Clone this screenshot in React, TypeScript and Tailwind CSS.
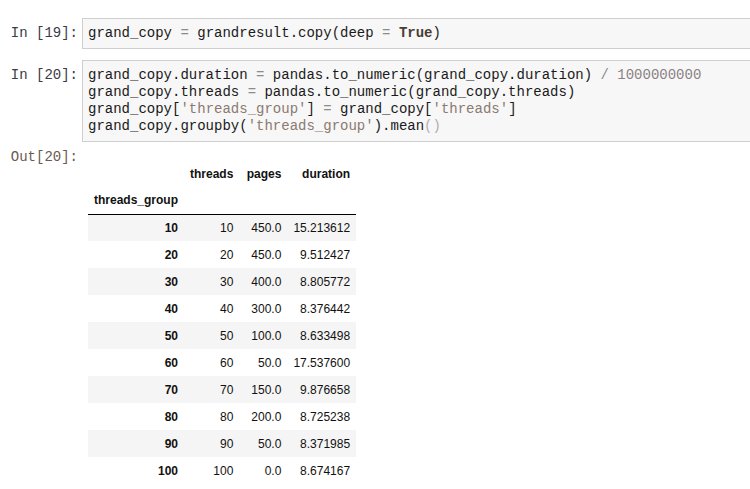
import React from "react";

const mono = { fontFamily: '"Liberation Mono", "Courier New", monospace' };

const Op = ({ c }: { c: string }) => <span className="text-[#8c8c8c]">{c}</span>;
const Str = ({ c }: { c: string }) => <span className="text-[#8a7a70]">{c}</span>;
const Num = ({ c }: { c: string }) => <span className="text-[#8a8282]">{c}</span>;

const rows = [
  ["10", "10", "450.0", "15.213612"],
  ["20", "20", "450.0", "9.512427"],
  ["30", "30", "400.0", "8.805772"],
  ["40", "40", "300.0", "8.376442"],
  ["50", "50", "100.0", "8.633498"],
  ["60", "60", "50.0", "17.537600"],
  ["70", "70", "150.0", "9.876658"],
  ["80", "80", "200.0", "8.725238"],
  ["90", "90", "50.0", "8.371985"],
  ["100", "100", "0.0", "8.674167"],
];

export default function App() {
  return (
    <div className="w-[750px] h-[489px] overflow-hidden bg-white">
      <div className="pt-[18px] flex flex-col">
        {/* Cell 19 */}
        <div className="flex items-start">
          <div
            className="w-[82px] shrink-0 pr-[4px] pt-[7px] text-right text-[14px] leading-[17px] text-[#3a3a48]"
            style={mono}
          >
            In&nbsp;[19]:
          </div>
          <div
            className="w-[700px] shrink-0 border border-[#cfcfcf] bg-[#f7f7f7] px-[5px] py-[6px] text-[14px] leading-[17px] text-[#1a1a1a] whitespace-pre"
            style={mono}
          >
            grand_copy <Op c="=" /> grandresult.copy(deep <Op c="=" />{" "}
            <span className="font-bold text-[#4a3d36]">True</span>)
          </div>
        </div>

        {/* Cell 20 */}
        <div className="flex items-start mt-[11px]">
          <div
            className="w-[82px] shrink-0 pr-[4px] pt-[7px] text-right text-[14px] leading-[17px] text-[#3a3a48]"
            style={mono}
          >
            In&nbsp;[20]:
          </div>
          <div
            className="w-[700px] shrink-0 border border-[#cfcfcf] bg-[#f7f7f7] px-[5px] py-[6px] text-[14px] leading-[17px] text-[#1a1a1a] whitespace-pre"
            style={mono}
          >
            <div>
              grand_copy.duration <Op c="=" /> pandas.to_numeric(grand_copy.duration) <Op c="/" />{" "}
              <Num c="1000000000" />
            </div>
            <div>
              grand_copy.threads <Op c="=" /> pandas.to_numeric(grand_copy.threads)
            </div>
            <div>
              grand_copy[<Str c="'threads_group'" />] <Op c="=" /> grand_copy[<Str c="'threads'" />]
            </div>
            <div>
              grand_copy.groupby(<Str c="'threads_group'" />).mean
              <span className="text-[#b0b0b0]">()</span>
            </div>
          </div>
        </div>

        {/* Output 20 */}
        <div className="flex items-start mt-[7px]">
          <div
            className="w-[82px] shrink-0 pr-[4px] text-right text-[14px] leading-[17px] text-[#6a5a50]"
            style={mono}
          >
            Out[20]:
          </div>
          <div className="pl-[6px] pt-[11px]">
            <table
              className="border-collapse text-[12px] text-[#111]"
              style={{ fontFamily: '"Liberation Sans", Arial, sans-serif' }}
            >
              <thead>
                <tr className="h-[27px] font-bold">
                  <th className="w-[95px] px-[6px]"></th>
                  <th className="w-[55px] px-[6px] text-right">threads</th>
                  <th className="w-[48px] px-[6px] text-right">pages</th>
                  <th className="w-[67px] px-[6px] text-right">duration</th>
                </tr>
                <tr className="h-[27px] font-bold border-b border-black">
                  <th className="px-[6px] text-left">threads_group</th>
                  <th></th>
                  <th></th>
                  <th></th>
                </tr>
              </thead>
              <tbody>
                {rows.map((r, i) => (
                  <tr key={r[0]} className={i % 2 === 0 ? "h-[27px] bg-[#f5f5f5]" : "h-[27px]"}>
                    <th className="px-[6px] text-right font-bold">{r[0]}</th>
                    <td className="px-[6px] text-right">{r[1]}</td>
                    <td className="px-[6px] text-right">{r[2]}</td>
                    <td className="px-[6px] text-right">{r[3]}</td>
                  </tr>
                ))}
              </tbody>
            </table>
          </div>
        </div>
      </div>
    </div>
  );
}
